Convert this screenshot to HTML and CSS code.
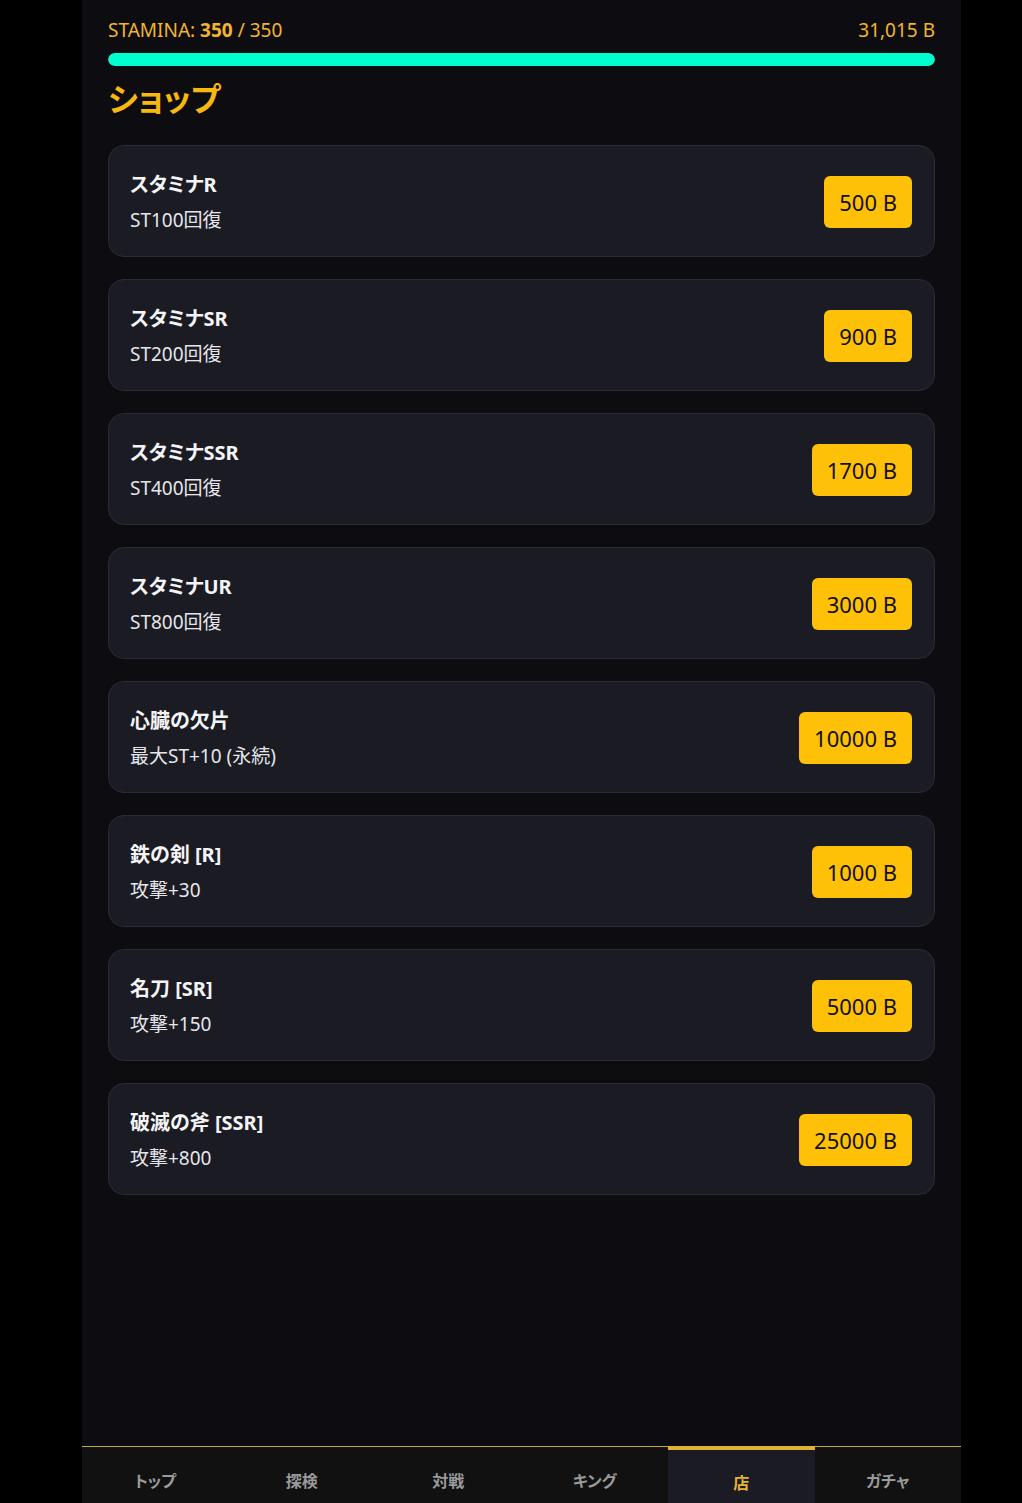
FILE: index.html
```html
<!DOCTYPE html>
<html lang="ja">
<head>
  <meta charset="UTF-8">
  <meta name="viewport" content="width=device-width, initial-scale=1.0">
  <title>ショップ</title>
  <link rel="stylesheet" href="styles.css">
</head>
<body>
  <div class="app">
    <div class="status">
      <div class="stamina">STAMINA: <b>350</b> / 350</div>
      <div class="coins">31,015 B</div>
    </div>
    <div class="st-bar">
      <div class="st-fill" style="width: 100%;"></div>
    </div>

    <h1 class="page-title">ショップ</h1>

    <div class="shop-list">
      <div class="item">
        <div class="item-info">
          <div class="item-name">スタミナR</div>
          <div class="item-desc">ST100回復</div>
        </div>
        <button class="buy">500 B</button>
      </div>
      <div class="item">
        <div class="item-info">
          <div class="item-name">スタミナSR</div>
          <div class="item-desc">ST200回復</div>
        </div>
        <button class="buy">900 B</button>
      </div>
      <div class="item">
        <div class="item-info">
          <div class="item-name">スタミナSSR</div>
          <div class="item-desc">ST400回復</div>
        </div>
        <button class="buy">1700 B</button>
      </div>
      <div class="item">
        <div class="item-info">
          <div class="item-name">スタミナUR</div>
          <div class="item-desc">ST800回復</div>
        </div>
        <button class="buy">3000 B</button>
      </div>
      <div class="item">
        <div class="item-info">
          <div class="item-name">心臓の欠片</div>
          <div class="item-desc">最大ST+10 (永続)</div>
        </div>
        <button class="buy">10000 B</button>
      </div>
      <div class="item">
        <div class="item-info">
          <div class="item-name">鉄の剣 [R]</div>
          <div class="item-desc">攻撃+30</div>
        </div>
        <button class="buy">1000 B</button>
      </div>
      <div class="item">
        <div class="item-info">
          <div class="item-name">名刀 [SR]</div>
          <div class="item-desc">攻撃+150</div>
        </div>
        <button class="buy">5000 B</button>
      </div>
      <div class="item">
        <div class="item-info">
          <div class="item-name">破滅の斧 [SSR]</div>
          <div class="item-desc">攻撃+800</div>
        </div>
        <button class="buy">25000 B</button>
      </div>
    </div>

    <nav class="tabbar">
      <div class="tab">トップ</div>
      <div class="tab">探検</div>
      <div class="tab">対戦</div>
      <div class="tab">キング</div>
      <div class="tab active">店</div>
      <div class="tab">ガチャ</div>
    </nav>
  </div>
</body>
</html>
```

FILE: styles.css
```css
body {
  margin: 0;
  background-color: #000000;
  font-family: "Noto Sans", "Noto Sans CJK JP", sans-serif;
  font-feature-settings: "palt";
  color: #ffffff;
}

.app {
  width: 879px;
  min-height: 100vh;
  margin-left: 82px;
  padding: 18px 26px 80px;
  box-sizing: border-box;
  background-color: #0d0d11;
}

/* Status header */
.status {
  display: flex;
  justify-content: space-between;
  align-items: center;
  font-size: 19px;
  line-height: 24px;
  color: #f2b52c;
}

.status b {
  font-weight: 700;
}

.st-bar {
  margin-top: 11px;
  height: 13px;
  border-radius: 7px;
  background-color: #2a2a33;
  overflow: hidden;
}

.st-fill {
  height: 100%;
  background-color: #00ffcf;
  border-radius: 7px;
}

.page-title {
  margin: 13px 0 26px;
  font-size: 32px;
  line-height: 40px;
  font-weight: 700;
  color: #f7b90f;
}

/* Shop items */
.shop-list {
  display: flex;
  flex-direction: column;
  gap: 22px;
}

.item {
  display: flex;
  justify-content: space-between;
  align-items: center;
  padding: 24px 22px 22px 21px;
  background-color: #1b1b23;
  border: 1px solid #2b2b36;
  border-radius: 16px;
}

.item-name {
  font-size: 20px;
  line-height: 30px;
  font-weight: 700;
  color: #f4f4f6;
}

.item-desc {
  margin-top: 6px;
  font-size: 19px;
  line-height: 28px;
  color: #e6e6ea;
}

.buy {
  border: none;
  border-radius: 6px;
  padding: 0 15px;
  height: 52px;
  background-color: #ffc107;
  color: #111111;
  font-family: inherit;
  font-size: 22px;
  cursor: pointer;
}

/* Bottom navigation */
.tabbar {
  position: fixed;
  bottom: 0;
  left: 82px;
  width: 879px;
  height: 57px;
  display: flex;
  background-color: #111111;
  border-top: 1px solid #caa43c;
  box-sizing: border-box;
}

.tab {
  flex: 1;
  display: flex;
  justify-content: center;
  align-items: center;
  padding-top: 10px;
  font-size: 16px;
  font-weight: 700;
  color: #9a9a9a;
}

.tab.active {
  background-color: #1b1b26;
  border-top: 4px solid #e0b234;
  margin-top: -1px;
  color: #e8b332;
}
```
